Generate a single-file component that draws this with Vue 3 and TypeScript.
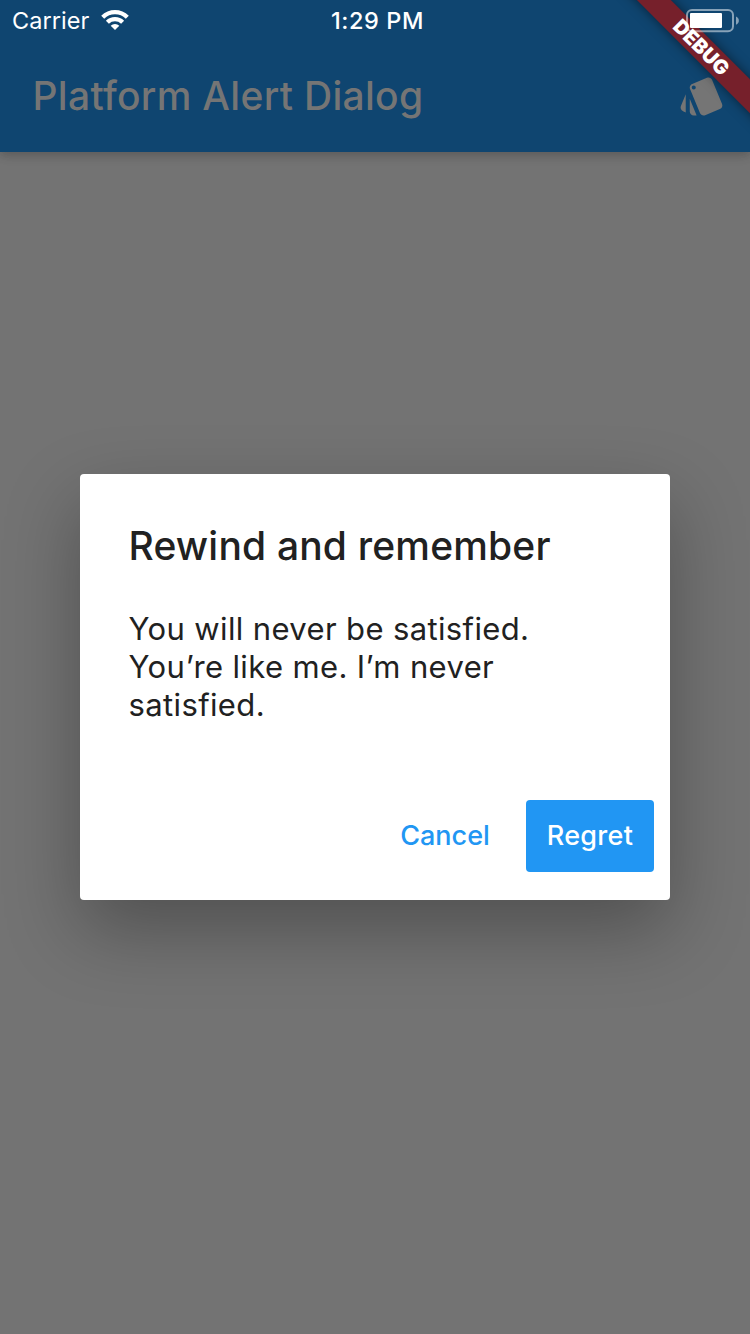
<script setup lang="ts">
const title: string = 'Rewind and remember'
const lines: string[] = ['You will never be satisfied.', 'You’re like me. I’m never', 'satisfied.']
</script>

<template>
  <div class="screen">
    <header class="app-bar">
      <div class="toolbar">
        <h1 class="app-title">Platform Alert Dialog</h1>
        <svg class="style-icon" viewBox="0 0 24 24" aria-hidden="true">
          <path d="M2.53 19.65l1.34.56v-9.03l-2.43 5.86c-.41 1.02.08 2.19 1.09 2.61zm19.5-3.7L17.07 3.98c-.31-.75-1.04-1.21-1.81-1.23-.26 0-.53.04-.79.15L7.1 5.95c-.75.31-1.21 1.03-1.23 1.8-.01.27.04.54.15.8l4.96 11.97c.31.76 1.05 1.22 1.83 1.23.26 0 .52-.05.77-.15l7.36-3.05c1.02-.42 1.51-1.59 1.09-2.6zM7.88 8.75c-.55 0-1-.45-1-1s.45-1 1-1 1 .45 1 1-.45 1-1 1zm-2 11c0 1.1.9 2 2 2h1.45l-3.45-8.34v6.34z" />
        </svg>
      </div>
    </header>

    <main class="stage">
      <section class="dialog" role="alertdialog">
        <h2 class="dialog-title">{{ title }}</h2>
        <p class="dialog-text">
          <span v-for="line in lines" :key="line" class="line">{{ line }}</span>
        </p>
        <div class="actions">
          <button class="btn cancel" type="button">Cancel</button>
          <button class="btn regret" type="button">Regret</button>
        </div>
      </section>
    </main>

    <div class="ribbon"><span>DEBUG</span></div>

    <div class="status-bar">
      <div class="carrier">
        <span>Carrier</span>
        <svg class="wifi" viewBox="0 0 28 20" aria-hidden="true">
          <path d="M0.200 5.700a19.600 19.600 0 0 1 27.600 0l-3 3a15.300 15.300 0 0 0-21.600 0z" />
          <path d="M4.900 10.800a12.900 12.900 0 0 1 18.200 0l-3 3a8.700 8.700 0 0 0-12.200 0z" />
          <path d="M9.700 15.700a6.100 6.100 0 0 1 8.600 0L14 20z" />
        </svg>
      </div>
      <span class="time">1:29 PM</span>
      <svg class="battery" viewBox="0 0 54 24" aria-hidden="true">
        <rect x="1" y="1" width="46" height="21.200" rx="5" class="shell" />
        <rect x="4" y="4" width="32" height="15" rx="1" class="level" />
        <path d="M50 7.500c3.800 1.400 3.800 6.900 0 8.300z" class="cap" />
      </svg>
    </div>
  </div>
</template>

<style>
body {
  margin: 0;
}
</style>

<style scoped>
.screen {
  position: relative;
  width: 750px;
  height: 1334px;
  overflow: hidden;
  display: flex;
  flex-direction: column;
  background: #737373;
  font-family: Inter, "Liberation Sans", sans-serif;
}
.app-bar {
  box-sizing: border-box;
  flex: none;
  height: 152px;
  padding-top: 40px;
  background: #0f4570;
  box-shadow: 0 4px 8px rgba(0, 0, 0, 0.14), 0 2px 14px rgba(0, 0, 0, 0.08);
}
.toolbar {
  display: flex;
  align-items: center;
  justify-content: space-between;
  height: 112px;
  padding: 0 24px 0 32.500px;
}
.app-title {
  margin: 0;
  font-size: 39px;
  font-weight: 550;
  letter-spacing: 0.3px;
  line-height: 48px;
  color: #757575;
}
.style-icon {
  width: 48px;
  height: 48px;
  fill: #757575;
}
.stage {
  flex: 1;
  display: flex;
  justify-content: center;
  align-items: flex-start;
  padding-top: 322px;
}
.dialog {
  box-sizing: border-box;
  width: 590px;
  height: 426px;
  display: flex;
  flex-direction: column;
  padding: 48px 16px 28px 48.5px;
  border-radius: 4px;
  background: #fff;
  color: #212121;
  box-shadow: 0 30px 76px 0 rgba(0, 0, 0, 0.3);
}
.dialog-title {
  margin: 0;
  font-size: 39px;
  font-weight: 500;
  letter-spacing: 0.18px;
  line-height: 48px;
  white-space: nowrap;
}
.dialog-text {
  margin: 40px 0 0;
  font-size: 31px;
  font-weight: 380;
  letter-spacing: 0.37px;
  line-height: 38px;
}
.line {
  display: block;
  white-space: nowrap;
}
.actions {
  display: flex;
  justify-content: flex-end;
  gap: 16px;
  margin-top: auto;
}
.btn {
  height: 72px;
  padding: 0 0 2px;
  border: 0;
  border-radius: 4px;
  font-family: inherit;
  font-size: 27px;
  font-weight: 550;
  white-space: nowrap;
}
.cancel {
  width: 130px;
  background: transparent;
  color: #2196f3;
}
.regret {
  width: 128px;
  background: #2196f3;
  color: #fff;
  letter-spacing: 0.3px;
}
.ribbon {
  position: absolute;
  left: 750px;
  top: 0;
  width: 0;
  height: 0;
  transform: rotate(45deg);
}
.ribbon span {
  position: absolute;
  left: -101px;
  top: 56px;
  width: 200px;
  height: 24px;
  background: #76202b;
  box-shadow: 0 0 12px rgba(0, 0, 0, 0.5);
  color: #fff;
  font-size: 20px;
  font-weight: 900;
  line-height: 25px;
  text-align: center;
}
.status-bar {
  position: absolute;
  left: 0;
  top: 0;
  width: 750px;
  height: 40px;
  display: grid;
  grid-template-columns: 1fr auto 1fr;
  align-items: center;
  box-sizing: border-box;
  padding: 0 10px 0 12px;
  color: #fff;
  font-size: 23.500px;
}
.carrier {
  display: flex;
  align-items: center;
  gap: 11.500px;
  letter-spacing: 0.05px;
}
.wifi {
  width: 28px;
  height: 20px;
  fill: #fff;
}
.time {
  padding-left: 3px;
  font-weight: 550;
  letter-spacing: 0.6px;
}
.battery {
  justify-self: end;
  width: 54px;
  height: 24px;
  margin-top: 1px;
}
.shell {
  fill: none;
  stroke: rgba(255, 255, 255, 0.5);
  stroke-width: 2;
}
.level {
  fill: #fff;
}
.cap {
  fill: rgba(255, 255, 255, 0.5);
}
</style>
